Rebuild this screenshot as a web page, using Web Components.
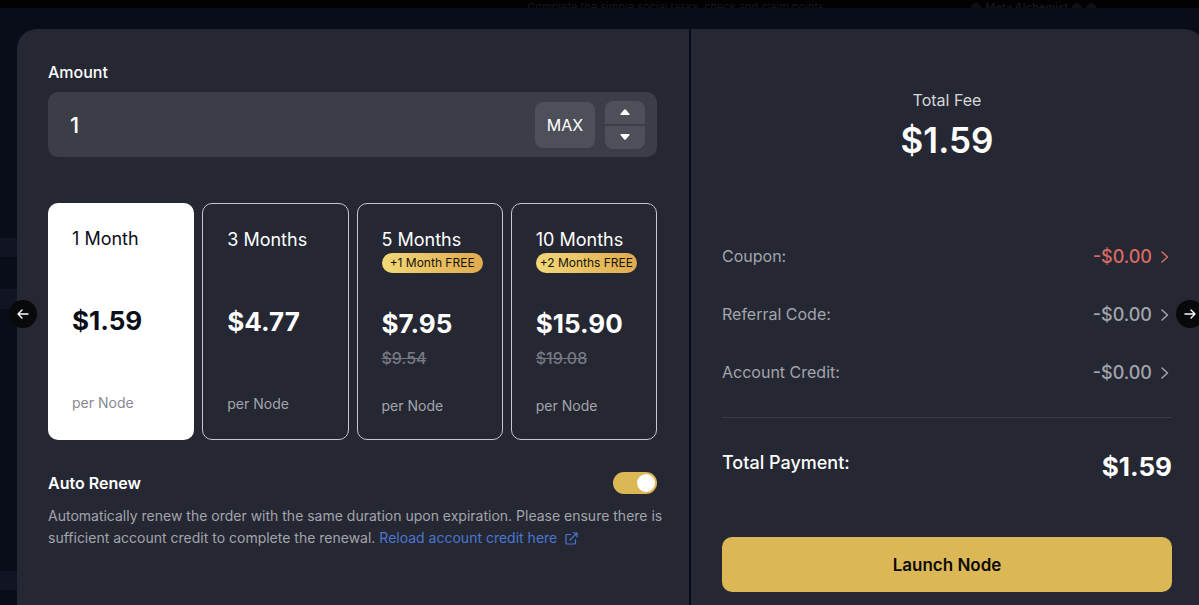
<!DOCTYPE html>
<html lang="en">
<head>
<meta charset="UTF-8">
<meta name="viewport" content="width=device-width, initial-scale=1.0">
<title>Launch Node</title>
<style>
  :root {
    --page: #090d1a;
    --panel: #252733;
    --field: #3c3e47;
    --control: #4e5059;
    --gold: #dcb755;
    --muted: #a3a5ac;
    --link: #4b77d1;
    --red: #dc6b64;
  }
  html, body { height: 100%; margin: 0; }
  body { background: var(--page); color: #fff; font: 400 16px/24px Inter, "Liberation Sans", sans-serif; overflow: hidden; }
</style>
</head>
<body>
<node-page>
  <order-dialog>
    <amount-field slot="form" value="1"></amount-field>
    <plan-picker slot="form"></plan-picker>
    <auto-renew slot="form">Auto Renew</auto-renew>

    <total-fee slot="summary" amount="$1.59">Total Fee</total-fee>
    <fee-row slot="summary" amount="-$0.00" alert>Coupon:</fee-row>
    <fee-row slot="summary" amount="-$0.00">Referral Code:</fee-row>
    <fee-row slot="summary" amount="-$0.00">Account Credit:</fee-row>
    <payment-total slot="summary" amount="$1.59">Total Payment:</payment-total>
    <launch-button slot="summary">Launch Node</launch-button>
  </order-dialog>
  <slide-arrow slot="nav" label="Previous" dir="left"></slide-arrow>
  <slide-arrow slot="nav" label="Next" dir="right"></slide-arrow>
</node-page>

<script>
class BaseElement extends HTMLElement {
  connectedCallback() {
    if (this.shadowRoot) return;
    this.attachShadow({ mode: 'open' });
    this.shadowRoot.innerHTML = `
      <style>
        * { box-sizing: border-box; }
        button, input { font: inherit; color: inherit; margin: 0; padding: 0; border: 0; }
        button { cursor: pointer; }
      </style>
      ${this.template()}`;
    this.ready();
  }

  template() { return ''; }
  ready() {}
}

class NodePage extends BaseElement {
  template() {
    return `
      <style>
        :host { display: flex; flex-direction: column; position: relative; height: 100%; overflow: hidden; }
        .strip { display: flex; flex: none; height: 8px; overflow: hidden; background: #020203; color: #15171b; font-size: 11px; line-height: 15px; white-space: nowrap; }
        .task { width: 81%; padding-left: 44%; }
        .author { display: flex; gap: 4px; font-weight: 600; }
        .dot { width: 10px; height: 10px; margin-top: 3px; border-radius: 50%; background: #0e1014; }
        /* rows of the dimmed page that stay visible beside the dialog */
        .stage { flex: 1; min-height: 0; padding: 21px 0 0 17px; background:
          linear-gradient(#111422, #111422) 0 230px / 17px 19px no-repeat,
          linear-gradient(#111422, #111422) 0 281px / 17px 20px no-repeat,
          linear-gradient(#111422, #111422) 0 563px / 17px 19px no-repeat; }
      </style>
      <div class="strip">
        <div class="task">Complete the simple social tasks, check and claim points</div>
        <div class="author"><span class="dot"></span>Meta Alchemist<span class="dot"></span><span class="dot"></span></div>
      </div>
      <div class="stage"><slot></slot></div>
      <slot name="nav"></slot>
    `;
  }
}

class OrderDialog extends BaseElement {
  template() {
    return `
      <style>
        :host { display: grid; grid-template-columns: 672fr 513fr; gap: 2px; height: 100%; margin-right: -5px; border-radius: 20px 20px 0 0; overflow: hidden; }
        .form, .summary { display: flex; flex-direction: column; min-width: 0; padding: 31px 32px 31px 31px; background: var(--panel); }
        .summary { padding-top: 59px; }
      </style>
      <section class="form"><slot name="form"></slot></section>
      <section class="summary"><slot name="summary"></slot></section>
    `;
  }
}

class AmountField extends BaseElement {
  template() {
    return `
      <style>
        :host { display: block; margin-bottom: 46px; }
        label { display: block; margin-bottom: 8px; font-weight: 500; }
        .field { display: flex; align-items: center; height: 65px; padding-right: 12px; border-radius: 10px; background: var(--field); }
        input { flex: 1; min-width: 0; height: 100%; padding-left: 22px; background: none; outline: none; font-size: 22px; font-weight: 500; }
        .max { width: 60px; height: 46px; border-radius: 8px; background: var(--control); }
        .stepper { display: flex; flex-direction: column; gap: 2px; width: 40px; margin-left: 10px; border-radius: 8px; overflow: hidden; }
        .stepper button { display: flex; align-items: center; justify-content: center; height: 23px; background: var(--control); }
        svg { display: block; }
      </style>
      <label for="amount">Amount</label>
      <div class="field">
        <input id="amount" type="text" inputmode="numeric" value="${this.getAttribute('value')}">
        <button class="max" type="button">MAX</button>
        <div class="stepper">
          <button type="button" data-step="1" aria-label="Increase">
            <svg width="10" height="6" viewBox="0 0 10 6"><path d="M1 6Q0 6 .5 5L4 .8Q5-.3 6 .8L9.500 5Q10 6 9 6Z" fill="#fff"/></svg>
          </button>
          <button type="button" data-step="-1" aria-label="Decrease">
            <svg width="10" height="6" viewBox="0 0 10 6"><path d="M1 0Q0 0 .5 1L4 5.200Q5 6.300 6 5.200L9.500 1Q10 0 9 0Z" fill="#fff"/></svg>
          </button>
        </div>
      </div>
    `;
  }

  ready() {
    const input = this.shadowRoot.getElementById('amount');
    this.shadowRoot.querySelectorAll('[data-step]').forEach(button => {
      button.addEventListener('click', () => {
        input.value = Math.max(1, (parseInt(input.value, 10) || 1) + Number(button.dataset.step));
      });
    });
  }
}

class PlanPicker extends BaseElement {
  template() {
    const plans = [
      { name: '1 Month', price: '$1.59' },
      { name: '3 Months', price: '$4.77' },
      { name: '5 Months', price: '$7.95', old: '$9.54', bonus: '+1 Month FREE' },
      { name: '10 Months', price: '$15.90', old: '$19.08', bonus: '+2 Months FREE' },
    ];

    return `
      <style>
        :host { display: block; margin-bottom: 31px; }
        .plans { display: grid; grid-template-columns: repeat(4, 1fr); gap: 8px; }
        .plan { display: flex; flex-direction: column; min-height: 237px; padding: 24px 19px 20px 24px; border: 1px solid #c4c6d0; border-radius: 10px; cursor: pointer; }
        .plan:has(input:checked) { border: 0; background: #fff; color: #0b0d18; }
        input { appearance: none; position: absolute; opacity: 0; }
        .name { font-size: 18px; }
        .bonus { height: 18px; margin-top: 1px; }
        .bonus.filled { height: 20px; border-radius: 10px; background: linear-gradient(90deg, #f2d878, #dfab4e); color: #17130a; font-size: 12px; line-height: 20px; text-align: center; white-space: nowrap; }
        .price { margin-top: 35px; font-size: 26px; line-height: 32px; font-weight: 700; }
        .old { height: 22px; margin-top: 7px; color: #777982; line-height: 22px; font-weight: 500; }
        .unit { margin-top: 26px; color: var(--muted); font-size: 14px; line-height: 22px; }
        .plan:has(input:checked) .unit { color: #898a8f; }
      </style>
      <div class="plans" role="radiogroup" aria-label="Duration">
        ${plans.map((plan, i) => `
          <label class="plan">
            <input type="radio" name="plan" ${i === 0 ? 'checked' : ''}>
            <span class="name">${plan.name}</span>
            <span class="bonus ${plan.bonus ? 'filled' : ''}">${plan.bonus || ''}</span>
            <span class="price">${plan.price}</span>
            <s class="old">${plan.old || ''}</s>
            <span class="unit">per Node</span>
          </label>
        `).join('')}
      </div>
    `;
  }
}

class AutoRenew extends BaseElement {
  template() {
    return `
      <style>
        :host { display: block; }
        .head { display: flex; align-items: center; justify-content: space-between; margin-bottom: 10px; }
        label { font-weight: 600; }
        input { appearance: none; display: flex; width: 44px; height: 22px; padding: 2px; border-radius: 11px; background: var(--control); cursor: pointer; }
        input::before { content: ""; width: 18px; height: 18px; border-radius: 50%; background: #fff; }
        input:checked { justify-content: flex-end; background: var(--gold); }
        p { margin: 0 -16px 0 0; color: var(--muted); font-size: 14px; line-height: 22px; }
        a { color: var(--link); text-decoration: none; }
        svg { margin-left: 4px; vertical-align: -2px; }
      </style>
      <div class="head">
        <label for="renew"><slot></slot></label>
        <input id="renew" type="checkbox" role="switch" checked>
      </div>
      <p>Automatically renew the order with the same duration upon expiration. Please ensure there is sufficient account credit to complete the renewal.
        <a href="#credit">Reload account credit here
          <svg width="13" height="13" viewBox="0 0 13 13" fill="none" stroke="currentColor" stroke-width="1.200" stroke-linecap="round" stroke-linejoin="round"><path d="M5.500 2.500H2Q1 2.500 1 3.500V11Q1 12 2 12H9.500Q10.500 12 10.500 11V7.500M8 1H12V5M12 1L5 8"/></svg></a></p>
    `;
  }
}

class TotalFee extends BaseElement {
  template() {
    return `
      <style>
        :host { display: flex; flex-direction: column; align-items: center; margin-bottom: 82px; color: #d6d7da; }
        .amount { margin-top: 6px; color: #fff; font-size: 35px; line-height: 44px; font-weight: 600; }
      </style>
      <slot></slot>
      <span class="amount">${this.getAttribute('amount')}</span>
    `;
  }
}

class FeeRow extends BaseElement {
  template() {
    return `
      <style>
        :host { display: flex; align-items: center; justify-content: space-between; margin-bottom: 34px; color: var(--muted); }
        button { display: flex; align-items: center; gap: 8px; padding: 1px 3px 0 0; background: none; font-size: 18px; line-height: 23px; font-weight: 500; }
        :host([alert]) button { color: var(--red); }
      </style>
      <span id="name"><slot></slot></span>
      <button type="button" aria-describedby="name">${this.getAttribute('amount')}
        <svg width="9" height="12" viewBox="0 0 9 12" fill="none" stroke="currentColor" stroke-width="1.500" stroke-linecap="round" stroke-linejoin="round"><path d="M2 1L7.500 6L2 11"/></svg>
      </button>
    `;
  }
}

class PaymentTotal extends BaseElement {
  template() {
    return `
      <style>
        :host { display: flex; align-items: flex-start; justify-content: space-between; margin: -1px 0 54px; padding-top: 33px; border-top: 1px solid #373945; font-size: 18px; font-weight: 500; }
        .amount { font-size: 26px; line-height: 32px; font-weight: 700; }
      </style>
      <slot></slot>
      <span class="amount">${this.getAttribute('amount')}</span>
    `;
  }
}

class LaunchButton extends BaseElement {
  template() {
    return `
      <style>
        :host { display: block; }
        button { width: 100%; height: 55px; border-radius: 10px; background: var(--gold); color: #0c0b0a; font-size: 17px; font-weight: 600; }
      </style>
      <button type="button"><slot></slot></button>
    `;
  }
}

class SlideArrow extends BaseElement {
  template() {
    return `
      <style>
        /* floats over the dialog edge */
        :host { position: absolute; top: 300px; left: 9px; }
        :host([dir="right"]) { left: auto; right: -5px; }
        button { display: flex; align-items: center; justify-content: center; width: 28px; height: 28px; border-radius: 50%; background: #08090b; color: #fff; }
        :host([dir="right"]) svg { transform: scaleX(-1); }
      </style>
      <button type="button" aria-label="${this.getAttribute('label')}">
        <svg width="12" height="10" viewBox="0 0 12 10" fill="none" stroke="currentColor" stroke-width="1.400" stroke-linecap="round" stroke-linejoin="round"><path d="M11 5H1M5 1L1 5L5 9"/></svg>
      </button>
    `;
  }
}

customElements.define('node-page', NodePage);
customElements.define('order-dialog', OrderDialog);
customElements.define('amount-field', AmountField);
customElements.define('plan-picker', PlanPicker);
customElements.define('auto-renew', AutoRenew);
customElements.define('total-fee', TotalFee);
customElements.define('fee-row', FeeRow);
customElements.define('payment-total', PaymentTotal);
customElements.define('launch-button', LaunchButton);
customElements.define('slide-arrow', SlideArrow);
</script>
</body>
</html>
